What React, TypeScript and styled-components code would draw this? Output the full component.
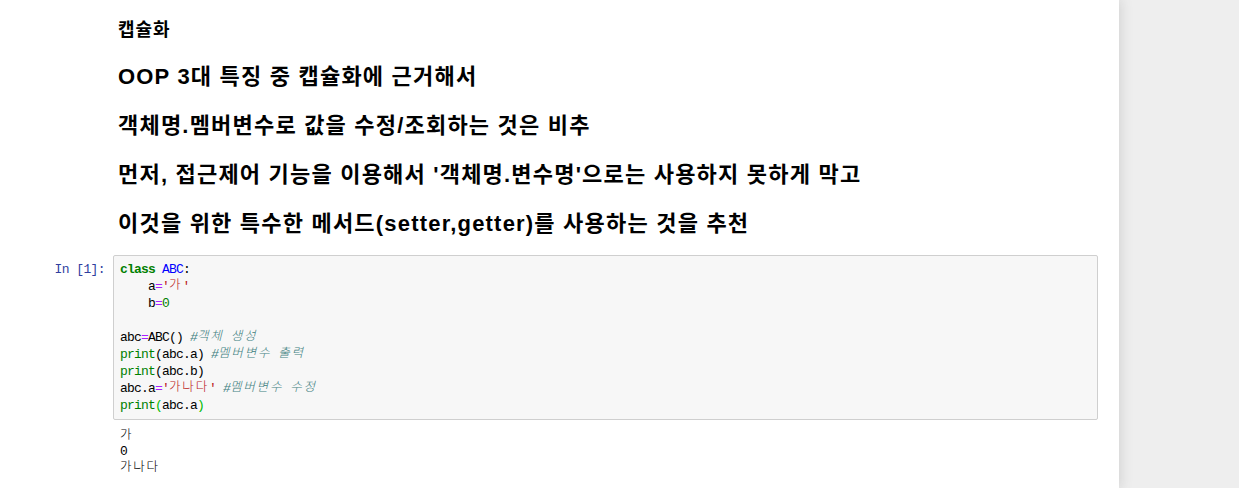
import React from "react";
import styled, { createGlobalStyle } from "styled-components";

const Global = createGlobalStyle`
  html, body { margin: 0; padding: 0; background: #eeeeee; }
  body { font-family: "Liberation Sans", "Noto Sans CJK KR", sans-serif; color: #000; }
`;

const Page = styled.div`
  display: flex;
  height: 488px;
  overflow: hidden;
`;

const Notebook = styled.div`
  width: 1119px;
  flex: none;
  background: #ffffff;
  box-shadow: 0 0 12px 1px rgba(87, 87, 87, 0.2);
  position: relative;
  z-index: 1;
  padding-top: 19px;
  box-sizing: border-box;
`;

const Side = styled.div`
  flex: 1;
  background: #eeeeee;
`;

const Markdown = styled.div`
  padding-left: 118px;
  display: flex;
  flex-direction: column;
  gap: 23px;
`;

const Heading = styled.div<{ $size: number; $lh: number; $ls: number }>`
  font-family: "Liberation Sans", "Noto Sans CJK KR", sans-serif;
  font-weight: bold;
  font-size: ${(p) => p.$size}px;
  letter-spacing: ${(p) => p.$ls}px;
  line-height: ${(p) => p.$lh}px;
  white-space: nowrap;
`;

const CodeCell = styled.div`
  display: flex;
  margin-top: 18px;
`;

const Prompt = styled.div`
  width: 107px;
  flex: none;
  box-sizing: border-box;
  padding-right: 2px;
  padding-top: 6px;
  text-align: right;
  color: #303f9f;
  font-family: "Liberation Mono", "Noto Sans CJK KR", monospace;
  font-size: 13px;
  letter-spacing: -0.6px;
  line-height: 17px;
`;

const Cells = styled.div`
  margin-left: 6px;
  width: 985px;
  display: flex;
  flex-direction: column;
`;

const InputArea = styled.div`
  border: 1px solid #cfcfcf;
  border-radius: 2px;
  background: #f7f7f7;
  padding: 5px 6px;
`;

const Mono = styled.pre<{ $lh: number }>`
  margin: 0;
  font-family: "Liberation Mono", "Noto Sans CJK KR", monospace;
  font-size: 13px;
  letter-spacing: -0.8px;
  line-height: ${(p) => p.$lh}px;
  color: #000;
`;

const Kr = styled.span`
  display: inline-block;
  vertical-align: top;
  font-family: "Noto Sans CJK KR", monospace;
  font-size: 12.5px;
  letter-spacing: 1.8px;
  font-weight: 300;
  line-height: 12px;
`;

const Output = styled.div`
  padding: 8px 7px 0;
`;

type Kind = "kw" | "def" | "op" | "str" | "num" | "com" | "bi" | "br";
const colors: Record<Kind, string> = {
  kw: "#008000",
  def: "#0000ff",
  op: "#aa22ff",
  str: "#ba2121",
  num: "#008000",
  com: "#408080",
  bi: "#008000",
  br: "#00bb00",
};

const Tok = styled.span<{ $k: Kind }>`
  color: ${(p) => colors[p.$k]};
  font-weight: ${(p) => (p.$k === "kw" ? "bold" : "normal")};
  font-style: ${(p) => (p.$k === "com" ? "italic" : "normal")};
`;

export default function App() {
  return (
    <>
      <Global />
      <Page>
        <Notebook>
          <Markdown>
            <Heading $size={18} $lh={22} $ls={1}>캡슐화</Heading>
            <Heading $size={22} $lh={26} $ls={1.2}>OOP 3대 특징 중 캡슐화에 근거해서</Heading>
            <Heading $size={22} $lh={26} $ls={1.2}>객체명.멤버변수로 값을 수정/조회하는 것은 비추</Heading>
            <Heading $size={22} $lh={26} $ls={1.2}>먼저, 접근제어 기능을 이용해서 '객체명.변수명'으로는 사용하지 못하게 막고</Heading>
            <Heading $size={22} $lh={26} $ls={1.2}>이것을 위한 특수한 메서드(setter,getter)를 사용하는 것을 추천</Heading>
          </Markdown>
          <CodeCell>
            <Prompt>In [1]:</Prompt>
            <Cells>
              <InputArea>
                <Mono $lh={17}>
                  <Tok $k="kw">class</Tok> <Tok $k="def">ABC</Tok>:{"\n"}
                  {"    "}a<Tok $k="op">=</Tok><Tok $k="str">'<Kr>가</Kr>'</Tok>{"\n"}
                  {"    "}b<Tok $k="op">=</Tok><Tok $k="num">0</Tok>{"\n"}
                  {"\n"}
                  abc<Tok $k="op">=</Tok>ABC() <Tok $k="com">#<Kr>객체</Kr> <Kr>생성</Kr></Tok>{"\n"}
                  <Tok $k="bi">print</Tok>(abc.a) <Tok $k="com">#<Kr>멤버변수</Kr> <Kr>출력</Kr></Tok>{"\n"}
                  <Tok $k="bi">print</Tok>(abc.b){"\n"}
                  abc.a<Tok $k="op">=</Tok><Tok $k="str">'<Kr>가나다</Kr>'</Tok> <Tok $k="com">#<Kr>멤버변수</Kr> <Kr>수정</Kr></Tok>{"\n"}
                  <Tok $k="bi">print</Tok><Tok $k="br">(</Tok>abc.a<Tok $k="br">)</Tok>
                </Mono>
              </InputArea>
              <Output>
                <Mono $lh={16}>
                  <Kr>가</Kr>{"\n"}0{"\n"}<Kr>가나다</Kr>
                </Mono>
              </Output>
            </Cells>
          </CodeCell>
        </Notebook>
        <Side />
      </Page>
    </>
  );
}
